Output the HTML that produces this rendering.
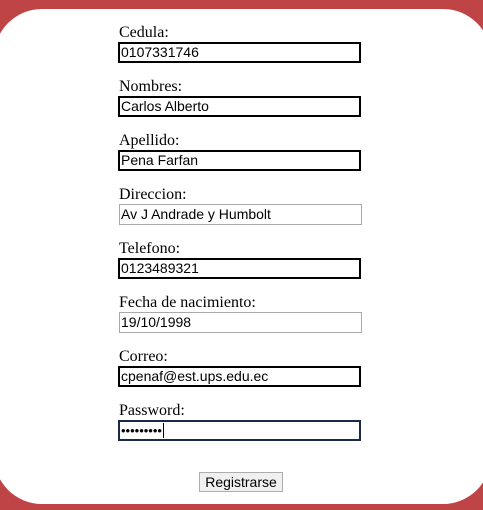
<!DOCTYPE html>
<html><head><style>
html,body{margin:0;padding:0;width:483px;height:510px;overflow:hidden;background:#bf4446;}
.panel{position:absolute;left:-6px;top:9px;width:497px;height:495px;background:#fff;border-radius:48px;}
.lbl{position:absolute;left:119px;font:16px "Liberation Serif",serif;color:#000;line-height:18px;}
.f{position:absolute;left:118px;width:238px;height:17px;border:2px solid #000;font:14px "Liberation Sans",sans-serif;line-height:17px;padding-left:1px;box-sizing:content-box;color:#000;white-space:nowrap;overflow:hidden;}
.thin{border:1px solid #a9a9a9;left:119px;width:240px;height:19px;line-height:19px;}
.pw{border-color:#1a2a4a;}
.btn{position:absolute;left:199px;top:472px;width:82px;height:18px;border:1px solid #adadad;background:#f0f0f0;font:14px "Liberation Sans",sans-serif;text-align:center;line-height:18px;}
</style></head><body>
<div class="panel"></div>
<div class="lbl" style="top:24px">Cedula:</div><div class="f" style="top:42px">0107331746</div>
<div class="lbl" style="top:78px">Nombres:</div><div class="f" style="top:96px">Carlos Alberto</div>
<div class="lbl" style="top:132px">Apellido:</div><div class="f" style="top:150px">Pena Farfan</div>
<div class="lbl" style="top:186px">Direccion:</div><div class="f thin" style="top:204px">Av J Andrade y Humbolt</div>
<div class="lbl" style="top:240px">Telefono:</div><div class="f" style="top:258px">0123489321</div>
<div class="lbl" style="top:294px">Fecha de nacimiento:</div><div class="f thin" style="top:312px">19/10/1998</div>
<div class="lbl" style="top:348px">Correo:</div><div class="f" style="top:366px">cpenaf@est.ups.edu.ec</div>
<div class="lbl" style="top:402px">Password:</div><div class="f pw" style="top:420px;font-size:13px">•••••••••<span style="border-left:1px solid #000;margin-left:1px"></span></div>
<div class="btn">Registrarse</div>
</body></html>
